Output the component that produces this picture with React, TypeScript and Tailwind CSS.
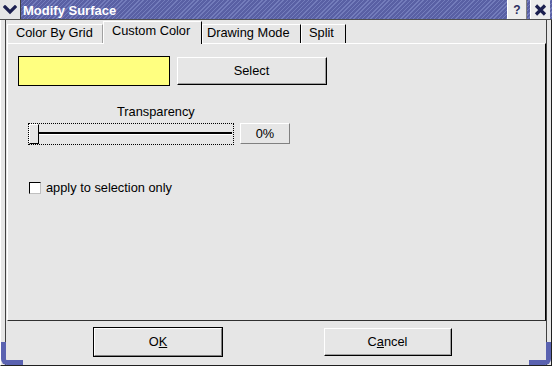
import React from "react";

const raised = "border-t border-l border-t-white border-l-white border-r border-b border-r-[#000] border-b-[#000]";

function Btn({ children, className = "", def = false }: { children: React.ReactNode; className?: string; def?: boolean }) {
  if (def) {
    return (
      <div className={"border border-black " + className}>
        <div className="w-full h-full border-t border-l border-t-white border-l-white border-r border-b border-r-[#808080] border-b-[#808080] flex items-center justify-center">
          {children}
        </div>
      </div>
    );
  }
  return (
    <div className={raised + " " + className}>
      <div className="w-full h-full border-r border-b border-r-[#a0a0a0] border-b-[#a0a0a0] flex items-center justify-center">
        {children}
      </div>
    </div>
  );
}

export default function App() {
  return (
    <div className="w-[552px] h-[366px] bg-[#e6e6e6] relative overflow-hidden font-['Liberation_Sans',Arial,sans-serif] text-[12.8px] leading-[16px] text-black flex flex-col">
      {/* Title bar */}
      <div className="h-[20px] flex shrink-0 border-b border-b-[#505050] bg-[repeating-linear-gradient(135deg,#5960a4_0px,#5960a4_2px,#737cbb_2px,#737cbb_3px)]">
        <div className="w-[21px] h-[19px] bg-[#e6e6e6] border-r border-r-[#404040] flex items-center justify-center">
          <svg width="14" height="10" viewBox="0 0 14 10">
            <path d="M2 2 L7 7 L12 2" stroke="#1c2050" strokeWidth="3.2" fill="none" strokeLinecap="square" />
          </svg>
        </div>
        <div className="flex-1 pl-[2px] flex items-center text-white font-bold text-[13px] leading-none pt-[1px]">Modify Surface</div>
        <div className="w-[20px] h-[19px] bg-[#ececec] border-l border-l-white border-r border-r-[#808080] flex items-center justify-center text-[#2a2e60] font-bold text-[12px]">?</div>
        <div className="w-[3px]" />
        <div className="w-[20px] h-[19px] bg-[#ececec] border-l border-l-white flex items-center justify-center">
          <svg width="13" height="12" viewBox="0 0 13 12">
            <path d="M2 1.5 L11 10.5 M11 1.5 L2 10.5" stroke="#1c2050" strokeWidth="3.2" />
          </svg>
        </div>
        <div className="w-[2px]" />
      </div>

      {/* Body with frame */}
      <div className="flex-1 flex border-l border-l-white border-r border-r-[#202020] border-b border-b-[#202020]">
        <div className="w-[5px] border-r border-r-[#404040]" />
        <div className="flex-1 flex flex-col">
          {/* Tab bar */}
          <div className="h-[23px] flex items-end pl-[1px] shrink-0">
            <div className="w-[96px] h-[19px] border-t border-l border-t-white border-l-white border-r border-r-[#a0a0a0] pl-[8px]">Color By Grid</div>
            <div className="w-[99px] h-[23px] border-t border-l border-t-white border-l-white border-r border-r-black bg-[#e6e6e6] pl-[8px] pt-[1px] relative top-[1px] z-10">Custom Color</div>
            <div className="w-[99px] h-[19px] border-t border-l border-t-white border-l-white border-r border-r-black pl-[4px]">Drawing Mode</div>
            <div className="w-[45px] h-[19px] border-t border-l border-t-white border-l-white border-r border-r-black pl-[7px]">Split</div>
          </div>
          {/* Panel */}
          <div className="h-[278px] ml-[1px] border-t border-l border-t-white border-l-white border-r border-r-black border-b border-b-[#303030] flex flex-col">
            <div className="flex items-center mt-[12px] ml-[10px]">
              <div className="w-[152px] h-[30px] bg-[#ffff80] border border-black" />
              <Btn className="w-[150px] h-[28px] ml-[7px]">Select</Btn>
            </div>
            <div className="ml-[109px] mt-[18px] leading-[16px]">Transparency</div>
            <div className="flex items-start ml-[20px] mt-[3px]">
              <div className="w-[206px] h-[22px] border border-dotted border-black relative">
                <div className="absolute left-[9px] right-[1px] top-[8px] h-[2px] bg-black" />
                <div className="absolute left-[9px] right-[1px] top-[10px] h-[1px] bg-white" />
                <div className="absolute left-0 top-0 w-[10px] h-[20px] bg-[#e6e6e6] border-t border-l border-t-white border-l-white border-r border-b border-r-black border-b-black" />
              </div>
              <div className="w-[50px] h-[21px] ml-[6px] border-t border-l border-t-white border-l-white border-r border-b border-r-[#808080] border-b-[#808080] flex items-center justify-center">0%</div>
            </div>
            <div className="flex items-center ml-[21px] mt-[35px]">
              <div className="w-[12px] h-[12px] bg-white border-t border-l border-t-black border-l-black border-r border-b border-r-[#c0c0c0] border-b-[#c0c0c0]" />
              <span className="ml-[5px]">apply to selection only</span>
            </div>
          </div>
          {/* Buttons */}
          <div className="flex-1 flex items-start">
            <Btn def className="w-[130px] h-[30px] ml-[87px] mt-[6px]">
              <span>O<span className="underline">K</span></span>
            </Btn>
            <Btn className="w-[128px] h-[28px] ml-[101px] mt-[7px]">
              <span>C<span className="underline">a</span>ncel</span>
            </Btn>
          </div>
        </div>
        <div className="w-[5px] border-l border-l-[#404040]" />
      </div>

      {/* Resize corner decorations */}
      <div className="absolute left-[1px] bottom-[1px] w-[22px] h-[23px] border-l-[5px] border-b-[5px] border-[#5a62b0] rounded-bl-[6px]" />
      <div className="absolute right-[1px] bottom-[1px] w-[22px] h-[23px] border-r-[5px] border-b-[5px] border-[#5a62b0] rounded-br-[6px]" />
    </div>
  );
}
